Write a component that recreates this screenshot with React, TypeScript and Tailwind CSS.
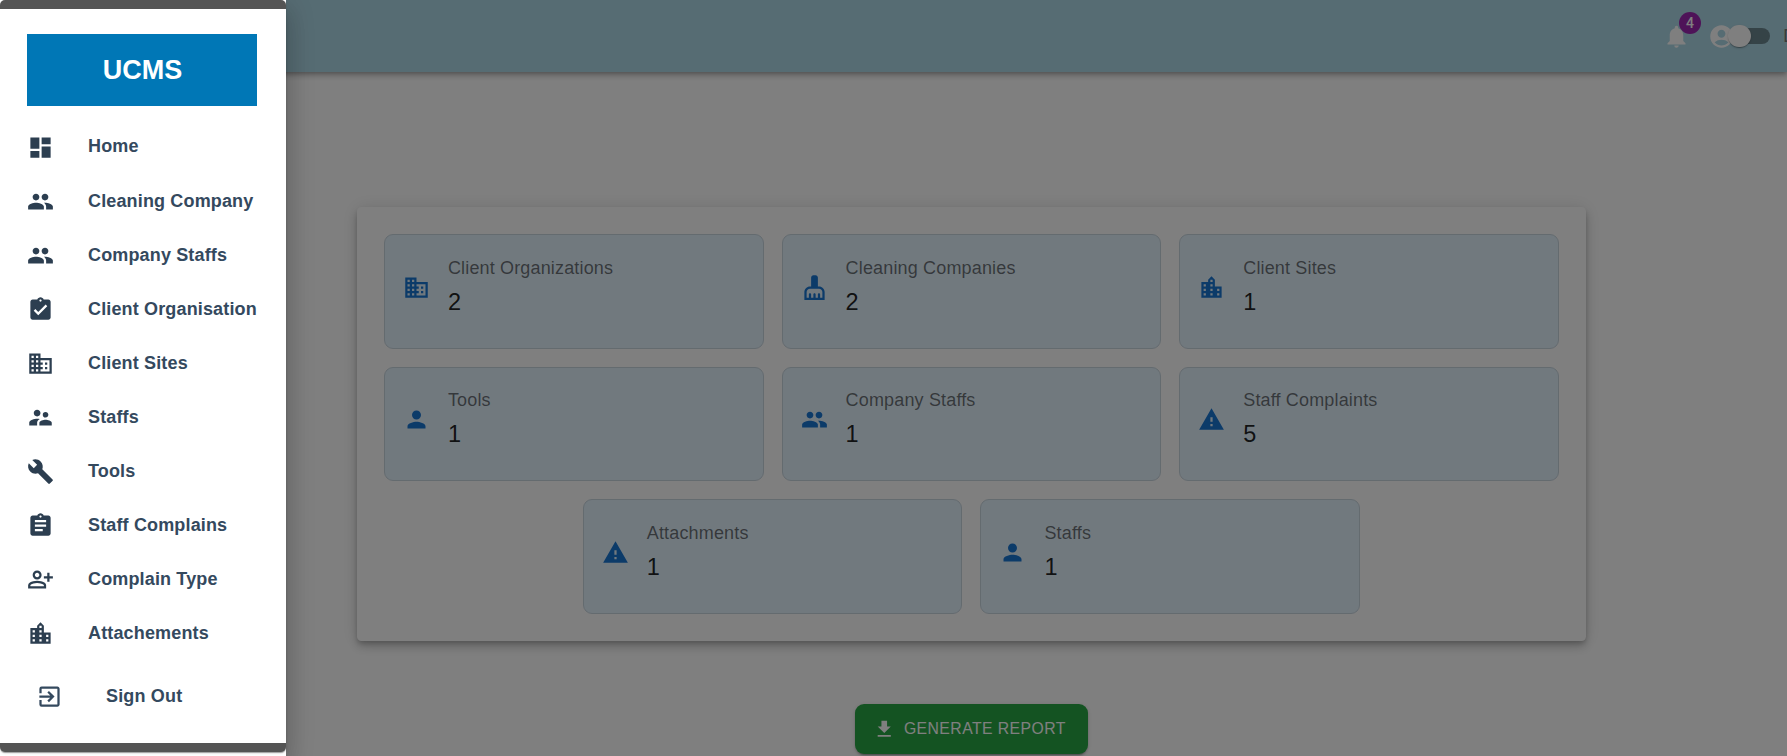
import {
  MdDashboard, MdPeople, MdAssignmentTurnedIn, MdBusiness, MdSupervisorAccount, MdBuild,
  MdAssignment, MdOutlinePersonAddAlt, MdLocationCity, MdExitToApp, MdCleaningServices,
  MdPerson, MdWarning, MdGetApp, MdNotifications, MdAccountCircle,
} from "react-icons/md";
import type { IconType } from "react-icons";

const menu: { label: string; Icon: IconType }[] = [
  { label: "Home", Icon: MdDashboard },
  { label: "Cleaning Company", Icon: MdPeople },
  { label: "Company Staffs", Icon: MdPeople },
  { label: "Client Organisation", Icon: MdAssignmentTurnedIn },
  { label: "Client Sites", Icon: MdBusiness },
  { label: "Staffs", Icon: MdSupervisorAccount },
  { label: "Tools", Icon: MdBuild },
  { label: "Staff Complains", Icon: MdAssignment },
  { label: "Complain Type", Icon: MdOutlinePersonAddAlt },
  { label: "Attachements", Icon: MdLocationCity },
];

const stats: { label: string; value: number; Icon: IconType }[] = [
  { label: "Client Organizations", value: 2, Icon: MdBusiness },
  { label: "Cleaning Companies", value: 2, Icon: MdCleaningServices },
  { label: "Client Sites", value: 1, Icon: MdLocationCity },
  { label: "Tools", value: 1, Icon: MdPerson },
  { label: "Company Staffs", value: 1, Icon: MdPeople },
  { label: "Staff Complaints", value: 5, Icon: MdWarning },
  { label: "Attachments", value: 1, Icon: MdWarning },
  { label: "Staffs", value: 1, Icon: MdPerson },
];

function StatCard({ label, value, Icon }: { label: string; value: number; Icon: IconType }) {
  return (
    <div className="flex h-[114.67px] w-[379.66px] items-center gap-[18px] rounded-[9px] border border-[#c8d6df] bg-[#e3f2fd] px-[18px] pt-[18.5px] pb-[26.5px]">
      <Icon className="size-[27px] shrink-0 text-[#1976d2]" />
      <div className="pt-[2px]">
        <p className="text-[18px] leading-[27px] tracking-[0.16px] text-black/55">{label}</p>
        <p className="text-[23.5px] leading-[40px] text-black/87">{value}</p>
      </div>
    </div>
  );
}

function Header() {
  return (
    <header className="relative flex h-[72px] shrink-0 items-center overflow-visible bg-[#add8e6] pl-[1663px] text-white shadow-[0px_2px_4px_-1px_rgba(0,0,0,0.2),0px_4px_5px_0px_rgba(0,0,0,0.14),0px_1px_10px_0px_rgba(0,0,0,0.12)]">
      <div className="relative size-[27px] shrink-0">
        <MdNotifications className="size-[27px]" />
        <span className="absolute -top-[10.5px] left-[16px] flex size-[22px] items-center justify-center rounded-full bg-[#9c27b0] font-['Roboto'] text-[14px] leading-none font-medium">
          4
        </span>
      </div>
      <MdAccountCircle className="ml-[18px] size-[27px] shrink-0" />
      <div className="relative -ml-[3.5px] flex h-[22.5px] w-[38.25px] shrink-0 items-center">
        <span className="h-[15.75px] w-full rounded-full bg-black/38" />
        <span className="absolute top-0 -left-[3.5px] size-[22.5px] rounded-full bg-white shadow-[0px_2px_1px_-1px_rgba(0,0,0,0.2),0px_1px_1px_0px_rgba(0,0,0,0.14),0px_1px_3px_0px_rgba(0,0,0,0.12)]" />
      </div>
      <span className="ml-[13.5px] shrink-0 text-[18px] leading-[27px] tracking-[0.17px] text-[#757575]">D</span>
    </header>
  );
}

function Drawer() {
  return (
    <aside className="fixed inset-y-0 left-0 w-[286px] bg-white shadow-[0px_8px_10px_-5px_rgba(0,0,0,0.2),0px_16px_24px_2px_rgba(0,0,0,0.14),0px_6px_30px_5px_rgba(0,0,0,0.12)]">
      <div className="h-[752px] rounded-[5px] bg-[#545454] py-[9px] shadow-[0px_2px_1px_-1px_rgba(0,0,0,0.2),0px_1px_1px_0px_rgba(0,0,0,0.14),0px_1px_3px_0px_rgba(0,0,0,0.12)]">
        <div className="flex h-full flex-col bg-white px-[27px] pt-[25px]">
          <div className="flex h-[72px] w-[230px] shrink-0 items-center justify-center bg-[#0077b6] pl-px text-[27px] font-bold text-white">
            UCMS
          </div>
          <nav className="mt-[13px] flex flex-col">
            {menu.map(({ label, Icon }) => (
              <a key={label} className="flex h-[54px] items-center whitespace-nowrap first:h-[55px]">
                <Icon className="mt-[1px] size-[27px] shrink-0 text-[#2c3e50]" />
                <span className="ml-[34px] text-[18px] leading-[27px] font-bold tracking-[0.15px] text-[#34495e]">{label}</span>
              </a>
            ))}
          </nav>
          <a className="mt-[9.5px] ml-[9px] flex h-[54px] items-center">
            <MdExitToApp className="size-[27px] shrink-0 text-[#34495e]" />
            <span className="ml-[43px] text-[18px] leading-[27px] font-bold tracking-[0.17px] text-[#34495e]">Sign Out</span>
          </a>
        </div>
      </div>
    </aside>
  );
}

export default function App() {
  return (
    <div className="h-[756px] w-full overflow-hidden bg-white font-['Liberation_Sans',Arial,sans-serif]">
      <div className="flex h-full flex-col">
        <Header />
        <main className="flex flex-col items-center pt-[135px] pl-[155.8px]">
          <section className="flex h-[434px] w-[1229px] flex-wrap content-start justify-center gap-[18px] rounded-[4.5px] bg-white py-[27px] shadow-[0px_3px_5px_-1px_rgba(0,0,0,0.2),0px_6px_10px_0px_rgba(0,0,0,0.14),0px_1px_18px_0px_rgba(0,0,0,0.12)]">
            {stats.map((s) => (
              <StatCard key={s.label} {...s} />
            ))}
          </section>
          <button className="mt-[63px] flex h-[50px] w-[233px] items-center rounded-[9px] bg-[#28a745] pl-[18px] text-[15.75px] tracking-[0.45px] whitespace-nowrap text-white shadow-[0px_3px_1px_-2px_rgba(0,0,0,0.2),0px_2px_2px_0px_rgba(0,0,0,0.14),0px_1px_5px_0px_rgba(0,0,0,0.12)]">
            <MdGetApp className="mr-[8.5px] size-[22.5px] shrink-0" />
            GENERATE REPORT
          </button>
        </main>
      </div>
      <div className="fixed inset-0 bg-black/50" />
      <Drawer />
    </div>
  );
}
